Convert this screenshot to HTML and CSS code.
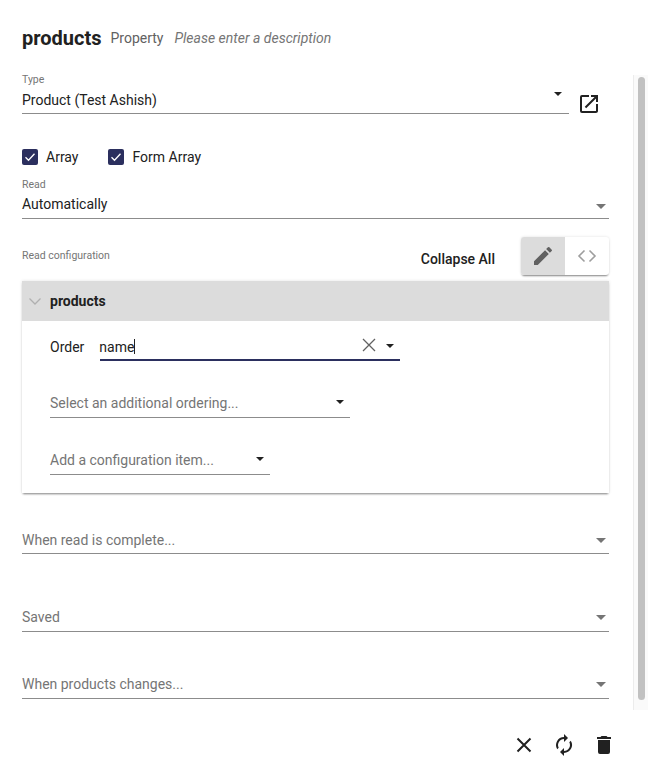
FILE: index.html
```html
<!DOCTYPE html>
<html lang="en">
<head>
  <meta charset="UTF-8" />
  <meta name="viewport" content="width=device-width, initial-scale=1.0"/>
  <title>products</title>
  <link rel="stylesheet" href="styles.css">
</head>
<body>
  <div class="header">
    <span class="title">products</span>
    <span class="kind">Property</span>
    <span class="description">Please enter a description</span>
  </div>

  <div class="body">
    <div class="main">
      <div class="type-row">
        <div class="field type-field">
          <div class="label">Type</div>
          <div class="select type-select">
            <span class="value">Product (Test Ashish)</span>
            <span class="caret dark"></span>
          </div>
        </div>
        <svg class="open-icon" width="24" height="24" viewBox="0 0 24 24">
          <path fill="#212121" d="M19 19H5V5h7V3H5a2 2 0 0 0-2 2v14a2 2 0 0 0 2 2h14c1.100 0 2-.9 2-2v-7h-2v7zM14 3v2h3.590l-9.830 9.830 1.410 1.410L19 6.410V10h2V3h-7z"/>
        </svg>
      </div>

      <div class="checks">
        <label class="check">
          <span class="box"><svg width="16" height="16" viewBox="0 0 16 16"><path d="M3.500 8.200l3 3 6-6.500" fill="none" stroke="#fff" stroke-width="1.300"/></svg></span>
          Array
        </label>
        <label class="check">
          <span class="box"><svg width="16" height="16" viewBox="0 0 16 16"><path d="M3.500 8.200l3 3 6-6.500" fill="none" stroke="#fff" stroke-width="1.300"/></svg></span>
          Form Array
        </label>
      </div>

      <div class="field read-field">
        <div class="label">Read</div>
        <div class="select">
          <span class="value">Automatically</span>
          <span class="caret grey"></span>
        </div>
      </div>

      <div class="config-head">
        <span class="label">Read configuration</span>
        <div class="config-tools">
          <span class="collapse">Collapse All</span>
          <div class="toggle">
            <span class="toggle-btn active">
              <svg width="24" height="24" viewBox="0 0 24 24"><path fill="#616161" d="M3 17.250V21h3.750L17.810 9.940l-3.750-3.750L3 17.250zM20.710 7.040a1 1 0 0 0 0-1.410l-2.340-2.340a1 1 0 0 0-1.410 0l-1.830 1.830 3.750 3.750 1.830-1.830z"/></svg>
            </span>
            <span class="toggle-btn">
              <svg width="24" height="24" viewBox="0 0 24 24"><path fill="none" stroke="#9e9e9e" stroke-width="1.600" d="M9.500 6.500L4 12l5.500 5.500M14.500 6.500L20 12l-5.500 5.500"/></svg>
            </span>
          </div>
        </div>
      </div>

      <div class="panel">
        <div class="panel-head">
          <svg width="14" height="14" viewBox="0 0 14 14"><path fill="none" stroke="#b0b0b0" stroke-width="1.300" d="M1.500 4.500L7 10l5.500-5.500"/></svg>
          <span>products</span>
        </div>
        <div class="panel-body">
          <div class="order-row">
            <span class="order-label">Order</span>
            <div class="select focused">
              <span class="value">name<span class="cursor"></span></span>
              <svg class="clear" width="14" height="14" viewBox="0 0 14 14"><path fill="none" stroke="#616161" stroke-width="1.300" d="M1 1l12 12M13 1L1 13"/></svg>
              <span class="caret dark"></span>
            </div>
          </div>
          <div class="select ordering">
            <span class="placeholder">Select an additional ordering...</span>
            <span class="caret dark"></span>
          </div>
          <div class="select add-item">
            <span class="placeholder">Add a configuration item...</span>
            <span class="caret dark"></span>
          </div>
        </div>
      </div>

      <div class="select after complete">
        <span class="placeholder">When read is complete...</span>
        <span class="caret grey"></span>
      </div>
      <div class="select after saved">
        <span class="placeholder">Saved</span>
        <span class="caret grey"></span>
      </div>
      <div class="select after changes">
        <span class="placeholder">When products changes...</span>
        <span class="caret grey"></span>
      </div>
    </div>

    <div class="scrollbar"><div class="thumb"></div></div>
  </div>

  <div class="footer">
    <svg width="24" height="24" viewBox="0 0 24 24"><path fill="none" stroke="#212121" stroke-width="2" d="M5.500 5.500l13 13M18.500 5.500l-13 13"/></svg>
    <svg width="24" height="24" viewBox="0 0 24 24"><path fill="#212121" d="M12 6v3l4-4-4-4v3a8 8 0 0 0-6.770 12.240L6.690 14.780A6 6 0 0 1 12 6zm6.770 1.760L17.310 9.220A6 6 0 0 1 12 18v-3l-4 4 4 4v-3a8 8 0 0 0 6.770-12.240z"/></svg>
    <svg width="24" height="24" viewBox="0 0 24 24"><path fill="#212121" d="M6 19a2 2 0 0 0 2 2h8a2 2 0 0 0 2-2V7H6v12zM19 4h-3.500l-1-1h-5l-1 1H5v2h14V4z"/></svg>
  </div>
</body>
</html>
```
FILE: styles.css
```css
* {
  box-sizing: border-box;
}
html, body {
  height: 100%;
}
body {
  margin: 0;
  display: flex;
  flex-direction: column;
  overflow: hidden;
  background: #fff;
  color: #212121;
  font-family: Roboto, "Liberation Sans", sans-serif;
  font-size: 14px;
}

.header {
  height: 75px;
  flex: none;
  padding: 26px 0 0 22px;
  display: flex;
  align-items: baseline;
}
.title {
  font-size: 20px;
  font-weight: 700;
  line-height: 24px;
}
.kind {
  margin-left: 9px;
  color: #616161;
  position: relative;
  top: -2px;
}
.description {
  margin-left: 11px;
  color: #757575;
  font-style: italic;
  position: relative;
  top: -2px;
}

.body {
  flex: none;
  height: 635px;
  display: flex;
  justify-content: space-between;
}
.main {
  width: 609px;
  padding-left: 22px;
}
.scrollbar {
  width: 15px;
  padding: 2px 3px 10px 4px;
  background: #fafafa;
  border-left: 1px solid #ececec;
}
.thumb {
  height: 100%;
  background: #c1c1c1;
  border-radius: 4px;
}

.label {
  font-size: 10.500px;
  line-height: 12px;
  color: #757575;
}
.select {
  display: flex;
  align-items: center;
  justify-content: space-between;
  border-bottom: 1px solid #8c8c8c;
}
.value, .placeholder {
  line-height: 20px;
}
.placeholder {
  color: #757575;
}
.caret {
  width: 0;
  height: 0;
  margin-right: 3px;
  border-left: 5px solid transparent;
  border-right: 5px solid transparent;
}
.caret.dark {
  margin-right: 6px;
  border-left-width: 4px;
  border-right-width: 4px;
  border-top: 4px solid #212121;
  transform: translateY(-1px);
}
.caret.grey {
  border-top: 5px solid #757575;
  transform: translateY(1px);
}

.type-row {
  display: flex;
  align-items: flex-end;
}
.type-field {
  width: 547px;
  margin-top: -1px;
}
.type-select {
  height: 28px;
  padding-top: 4px;
  align-items: flex-start;
}
.type-select .caret {
  margin-top: 3px;
  margin-right: 7px;
}
.open-icon {
  margin: 0 0 -2px 8px;
}

.checks {
  display: flex;
  gap: 30px;
  margin-top: 35px;
}
.check {
  display: flex;
  align-items: center;
  gap: 8px;
  line-height: 16px;
}
.box {
  width: 16px;
  height: 16px;
  border-radius: 2px;
  background: #2b2f5e;
  display: block;
}
.box svg {
  display: block;
}

.read-field {
  margin-top: 14px;
}
.read-field .select {
  height: 28px;
  padding-bottom: 1px;
}
.read-field .caret {
  transform: translateY(2px);
}

.config-head {
  margin-top: 18px;
  display: flex;
  justify-content: space-between;
  align-items: flex-start;
}
.config-head .label {
  margin-top: 13px;
}
.config-tools {
  display: flex;
  align-items: center;
  gap: 26px;
}
.collapse {
  font-weight: 500;
  margin-top: 6px;
}
.toggle {
  display: flex;
  width: 88px;
  height: 38px;
  background: #fff;
  border-radius: 3px;
  box-shadow: 0 2px 2px -1px rgba(0,0,0,0.45), 0 0 3px rgba(0,0,0,0.12);
  overflow: hidden;
}
.toggle-btn {
  width: 44px;
  display: flex;
  align-items: center;
  justify-content: center;
}
.toggle-btn.active {
  background: #dcdcdc;
}

.panel {
  margin-top: 6px;
  height: 212px;
  box-shadow: 0 2px 2px -1px rgba(0,0,0,0.45), 0 0 3px rgba(0,0,0,0.12);
}
.panel-head {
  height: 40px;
  background: #dcdcdc;
  display: flex;
  align-items: center;
  gap: 8px;
  padding-left: 6px;
  font-weight: 700;
}
.panel-body {
  padding-left: 28px;
}
.order-row {
  display: flex;
  align-items: center;
  gap: 16px;
  padding-top: 12px;
}
.focused {
  width: 300px;
  height: 28px;
  border-bottom: 2px solid #2b2f5e;
  padding-top: 1px;
}
.focused .value {
  flex: 1;
  margin-left: -1px;
}
.cursor {
  display: inline-block;
  width: 1px;
  height: 15px;
  background: #212121;
  vertical-align: -2px;
}
.clear {
  margin: 0 10px 4px 0;
}
.ordering {
  width: 300px;
  height: 29px;
  margin-top: 28px;
}
.add-item {
  width: 220px;
  height: 29px;
  margin-top: 28px;
}

.after {
  height: 28px;
}
.complete {
  margin-top: 33px;
}
.saved {
  margin-top: 50px;
  padding-bottom: 2px;
}
.changes {
  margin-top: 39px;
  padding-bottom: 2px;
}

.footer {
  flex: 1;
  display: flex;
  justify-content: flex-end;
  align-items: flex-start;
  gap: 16px;
  padding: 23px 32px 0 0;
}
```
